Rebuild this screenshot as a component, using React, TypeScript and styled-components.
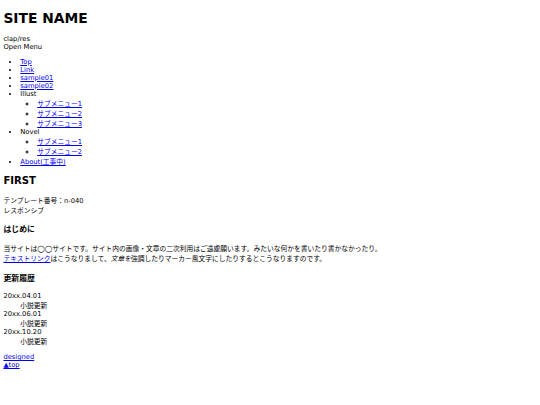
import React from "react";
import styled, { createGlobalStyle } from "styled-components";

const Global = createGlobalStyle`
  html, body { background: #fff; }
  body {
    margin: 3.4px;
    font-family: "DejaVu Sans", "Noto Sans CJK JP", sans-serif;
    font-size: 6.75px;
    color: #000;
  }
  a { color: #0000ee; }
`;

const SiteTitle = styled.h1`
  font-size: 2.05em;
  font-weight: bold;
  margin: 6.4px 0 9.2px;
`;

const Plain = styled.div``;

const List = styled.ul<{ $nested?: boolean }>`
  margin: ${(p) => (p.$nested ? "0" : "6.75px 0 9.5px")};
  padding-left: 16.9px;
  list-style-type: ${(p) => (p.$nested ? "circle" : "disc")};
`;

const Item = styled.li``;

const SectionTitle = styled.h2`
  font-size: 1.5em;
  font-weight: bold;
  margin: 0.83em 0;
`;

const SubTitle = styled.h3`
  font-size: 1.17em;
  font-weight: bold;
  margin: 8.2px 0 9.6px;
`;

const Para = styled.p`
  margin: 1em 0;
`;

const History = styled.dl`
  margin: 1em 0;
`;

const HistDate = styled.dt``;

const HistDesc = styled.dd`
  margin-left: 16.9px;
`;

const Footer = styled.footer``;

export default function App() {
  return (
    <>
      <Global />
      <header>
        <SiteTitle>SITE NAME</SiteTitle>
        <Plain>clap/res</Plain>
        <Plain>Open Menu</Plain>
        <nav>
          <List>
            <Item><a href="#">Top</a></Item>
            <Item><a href="#">Link</a></Item>
            <Item><a href="#">sample01</a></Item>
            <Item><a href="#">sample02</a></Item>
            <Item>
              Illust
              <List $nested>
                <Item><a href="#">サブメニュー1</a></Item>
                <Item><a href="#">サブメニュー2</a></Item>
                <Item><a href="#">サブメニュー3</a></Item>
              </List>
            </Item>
            <Item>
              Novel
              <List $nested>
                <Item><a href="#">サブメニュー1</a></Item>
                <Item><a href="#">サブメニュー2</a></Item>
              </List>
            </Item>
            <Item><a href="#">About(工事中)</a></Item>
          </List>
        </nav>
      </header>
      <main>
        <SectionTitle>FIRST</SectionTitle>
        <Para>
          テンプレート番号：n-040
          <br />
          レスポンシブ
        </Para>
        <SubTitle>はじめに</SubTitle>
        <Para>
          当サイトは◯◯サイトです。サイト内の画像・文章の二次利用はご遠慮願います。みたいな何かを書いたり書かなかったり。
          <br />
          <a href="#">テキストリンク</a>はこうなりまして、<em>文章を</em>強調したりマーカー風文字にしたりするとこうなりますのです。
        </Para>
        <SubTitle>更新履歴</SubTitle>
        <History>
          <HistDate>20xx.04.01</HistDate>
          <HistDesc>小説更新</HistDesc>
          <HistDate>20xx.06.01</HistDate>
          <HistDesc>小説更新</HistDesc>
          <HistDate>20xx.10.20</HistDate>
          <HistDesc>小説更新</HistDesc>
        </History>
      </main>
      <Footer>
        <a href="#">designed</a>
        <br />
        <a href="#">▲top</a>
      </Footer>
    </>
  );
}
